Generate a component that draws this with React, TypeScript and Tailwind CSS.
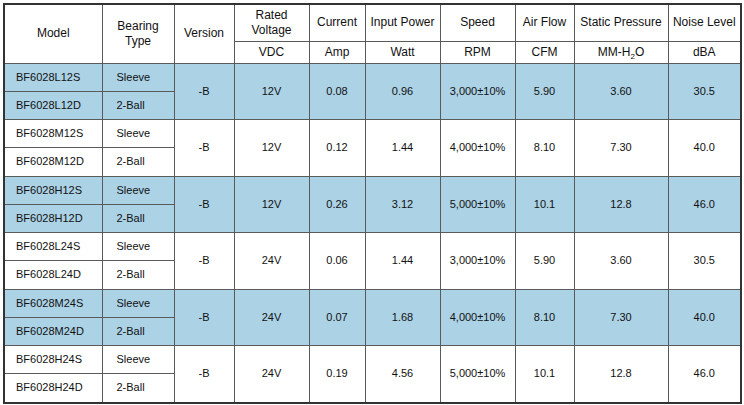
import React from "react";

type Group = {
  code: string;
  volt: string;
  amp: string;
  watt: string;
  rpm: string;
  cfm: string;
  mm: string;
  dba: string;
};

const groups: Group[] = [
  { code: "L12", volt: "12V", amp: "0.08", watt: "0.96", rpm: "3,000±10%", cfm: "5.90", mm: "3.60", dba: "30.5" },
  { code: "M12", volt: "12V", amp: "0.12", watt: "1.44", rpm: "4,000±10%", cfm: "8.10", mm: "7.30", dba: "40.0" },
  { code: "H12", volt: "12V", amp: "0.26", watt: "3.12", rpm: "5,000±10%", cfm: "10.1", mm: "12.8", dba: "46.0" },
  { code: "L24", volt: "24V", amp: "0.06", watt: "1.44", rpm: "3,000±10%", cfm: "5.90", mm: "3.60", dba: "30.5" },
  { code: "M24", volt: "24V", amp: "0.07", watt: "1.68", rpm: "4,000±10%", cfm: "8.10", mm: "7.30", dba: "40.0" },
  { code: "H24", volt: "24V", amp: "0.19", watt: "4.56", rpm: "5,000±10%", cfm: "10.1", mm: "12.8", dba: "46.0" },
];

const widths = [97, 72, 60, 75, 56, 75, 75, 59, 94, 72];

const th = "border border-[#5a5a5a] text-center align-middle font-normal text-[12px] leading-[15px] text-[#111]";
const td = "border border-[#5a5a5a] text-center align-middle text-[11px] leading-[13px] text-[#111]";

export default function App() {
  return (
    <div className="w-[744px] h-[405px] bg-white pl-[3px] pt-[3px]" style={{ fontFamily: '"Liberation Sans", Arial, sans-serif' }}>
      <div className="w-[739px] border-2 border-[#333]">
        <table className="w-[735px] table-fixed border-collapse border-hidden">
          <colgroup>
            {widths.map((w, i) => (
              <col key={i} style={{ width: w }} />
            ))}
          </colgroup>
          <thead>
            <tr className="h-[36px]">
              <th rowSpan={2} className={th}>Model</th>
              <th rowSpan={2} className={th}>Bearing<br />Type</th>
              <th rowSpan={2} className={th}>Version</th>
              <th className={th}>Rated<br />Voltage</th>
              <th className={th}>Current</th>
              <th className={th}>Input Power</th>
              <th className={th}>Speed</th>
              <th className={th}>Air Flow</th>
              <th className={th}>Static Pressure</th>
              <th className={th}>Noise Level</th>
            </tr>
            <tr className="h-[22px]">
              <th className={th}>VDC</th>
              <th className={th}>Amp</th>
              <th className={th}>Watt</th>
              <th className={th}>RPM</th>
              <th className={th}>CFM</th>
              <th className={`${th} text-[11px]`}>
                MM-H<sub className="text-[8px] align-baseline relative top-[3px]">2</sub>O
              </th>
              <th className={th}>dBA</th>
            </tr>
          </thead>
          <tbody>
            {groups.map((g, i) => {
              const bg = i % 2 === 0 ? "bg-[#acd2e6]" : "bg-white";
              const h1 = "h-[28px]";
              const h2 = i % 2 === 0 ? "h-[28px]" : "h-[29px]";
              return (
                <React.Fragment key={g.code}>
                  <tr className={`${bg} ${h1}`}>
                    <td className={`${td} text-left pl-[11px]`}>BF6028{g.code}S</td>
                    <td className={`${td} text-left pl-[14px]`}>Sleeve</td>
                    <td rowSpan={2} className={td}>-B</td>
                    <td rowSpan={2} className={td}>{g.volt}</td>
                    <td rowSpan={2} className={td}>{g.amp}</td>
                    <td rowSpan={2} className={td}>{g.watt}</td>
                    <td rowSpan={2} className={td}>{g.rpm}</td>
                    <td rowSpan={2} className={td}>{g.cfm}</td>
                    <td rowSpan={2} className={td}>{g.mm}</td>
                    <td rowSpan={2} className={td}>{g.dba}</td>
                  </tr>
                  <tr className={`${bg} ${h2}`}>
                    <td className={`${td} text-left pl-[11px]`}>BF6028{g.code}D</td>
                    <td className={`${td} text-left pl-[14px]`}>2-Ball</td>
                  </tr>
                </React.Fragment>
              );
            })}
          </tbody>
        </table>
      </div>
    </div>
  );
}
